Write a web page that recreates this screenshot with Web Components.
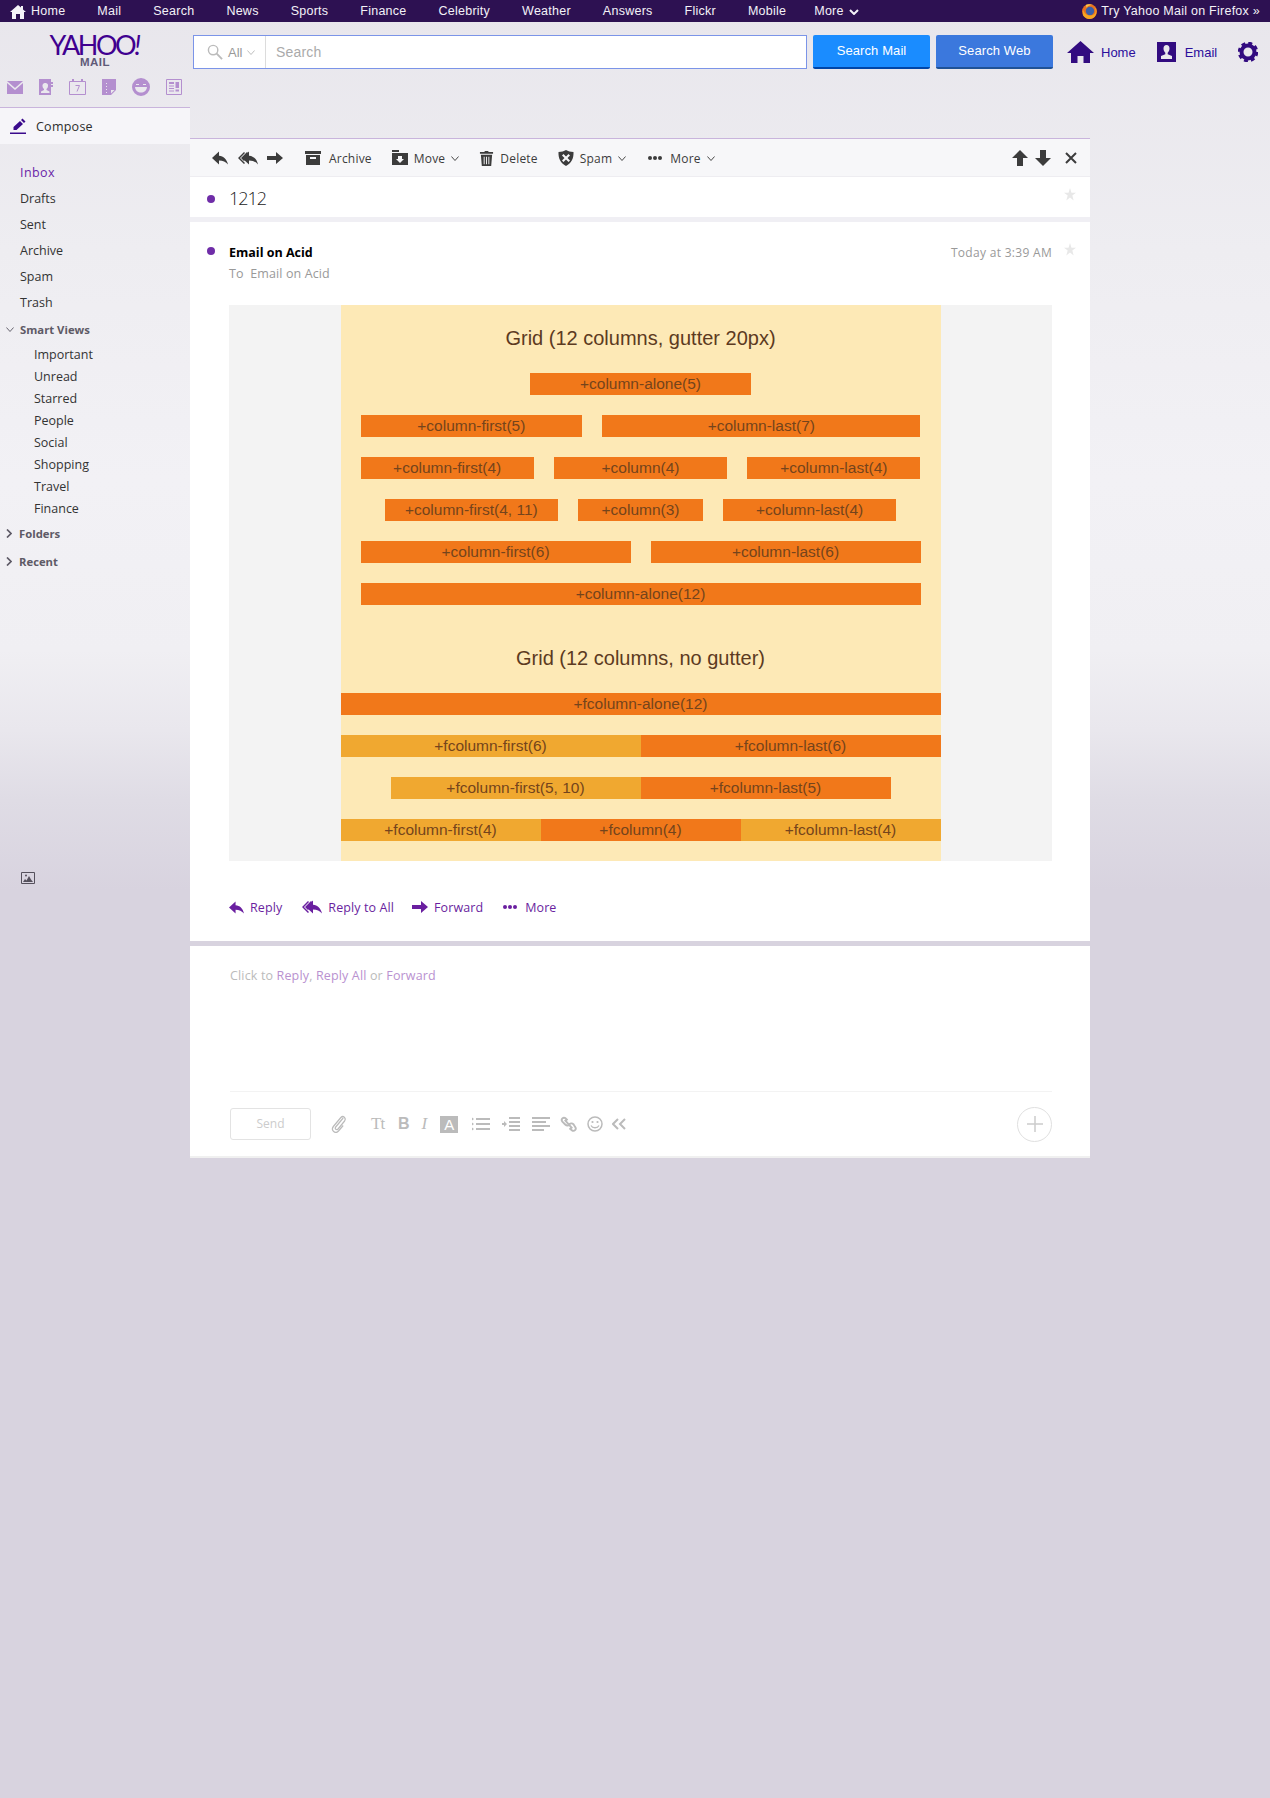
<!DOCTYPE html>
<html lang="en">
<head>
<meta charset="utf-8">
<title>Yahoo Mail</title>
<style>
  html { background: #d8d3df; height: 1798px; overflow: hidden; }
  body {
    margin: 0;
    height: 1798px;
    overflow: hidden;
    font-family: "Open Sans", "Liberation Sans", sans-serif;
    background: linear-gradient(180deg, #e8e6ec 0, #eeedf1 250px, #f2f1f5 480px, #f0eff3 650px, #e9e7ed 730px, #dfdce5 800px, #d8d3df 890px) no-repeat;
  }
  .shell { display: flex; align-items: flex-start; }
</style>
</head>
<body>
<ym-topnav></ym-topnav>
<div class="shell">
  <ym-sidebar></ym-sidebar>
  <ym-main>
    <ym-searchbar></ym-searchbar>
    <ym-toolbar></ym-toolbar>
    <ym-subject title-text="1212"></ym-subject>
    <ym-message>
      <ym-grid-demo></ym-grid-demo>
    </ym-message>
    <ym-composer></ym-composer>
  </ym-main>
</div>

<script>
(function () {
  "use strict";

  // Icon set, each entry is [viewBox, inner markup]
  const ICONS = {
    reply: ['0 0 16 16', '<path d="M0 8 7 1.500v4.200c4.500.3 7.800 3.300 9 8.800-2.300-2.800-5-4.100-9-4.100v4.100z"/>'],
    replyall: ['0 0 21 16', '<path d="M5 8 12 1.500v4.200c4.500.3 7.800 3.300 9 8.800-2.300-2.800-5-4.100-9-4.100v4.100z"/><path d="M7 2 1 8l6 6 1-1-5-5 5-5zM10 2 4 8l3 3 1-1-2-2 5-5z"/>'],
    forward: ['0 0 16 16', '<path d="M0 6h9V2l7 6-7 6v-4H0z"/>'],
    archive: ['0 0 16 16', '<path d="M0 1h16v3H0z"/><path fill-rule="evenodd" d="M1 5h14v10H1zM5 7v2h6V7z"/>'],
    move: ['0 0 16 16', '<path d="M0 0h7v2H0z"/><path fill-rule="evenodd" d="M0 3h16v12H0zM6 6v3H4l4 4 4-4h-2V6z"/>'],
    trash: ['0 0 16 16', '<path d="M6 0h4v1h5v2H1V1h5z"/><path fill-rule="evenodd" d="M2 4h12l-1 12H3zM5 6v8h1V6zM7.500 6v8h1V6zM10 6v8h1V6z"/>'],
    shield: ['0 0 16 16', '<path fill-rule="evenodd" d="M8 0c2 1.300 4.500 2 7.500 2 .3 6.500-2 11-7.500 14C2.500 13 .2 8.500.5 2 3.500 2 6 1.300 8 0zM5.500 4 4 5.500 6.500 8 4 10.500 5.500 12 8 9.500l2.500 2.500 1.500-1.500L9.500 8 12 5.500 10.500 4 8 6.500z"/>'],
    dots: ['0 0 14 4', '<circle cx="2" cy="2" r="2"/><circle cx="7" cy="2" r="2"/><circle cx="12" cy="2" r="2"/>'],
    up: ['0 0 16 16', '<path d="M8 0l8 8h-5v8H5V8H0z"/>'],
    down: ['0 0 16 16', '<path d="M8 16 0 8h5V0h6v8h5z"/>'],
    close: ['0 0 12 12', '<path d="M1 1l10 10M11 1 1 11" fill="none" stroke="currentColor" stroke-width="2"/>'],
    star: ['0 0 14 14', '<path d="M7 0l1.700 5H14l-4.300 3.100L11.300 13.500 7 10.300 2.700 13.500l1.600-5.400L0 5h5.300z"/>'],
    caret: ['0 0 9 5', '<path d="M.5.500l4 4 4-4" fill="none" stroke="currentColor"/>'],
    chevron: ['0 0 6 9', '<path d="M1 .5 5 4.500 1 8.500" fill="none" stroke="currentColor" stroke-width="1.700"/>'],
    morecaret: ['0 0 10 6', '<path d="M1 1l4 4 4-4" fill="none" stroke="currentColor" stroke-width="2"/>'],
    compose: ['0 0 16 16', '<path d="M10 3l3 3-6.500 6H3.500v-3zM11 2l1.500-1.500 3 3L14 5z"/><path d="M0 14.500h16V16H0z"/>'],
    envelope: ['0 0 16 13', '<path d="M0 0h16L8 7z"/><path d="M0 2l8 7 8-7v11H0z"/>'],
    contact: ['0 0 14 16', '<path fill-rule="evenodd" d="M0 0h12v3h2v2h-2v1h2v2h-2v8H0zM6 4a2.500 2.500 0 0 0-2.500 3c0 1.500 1 2.500 1.500 3v1l-3 1.500V14h8.500v-1.500L7.500 11v-1c.5-.5 1.500-1.500 1.500-3A2.500 2.500 0 0 0 6 4z"/>'],
    calendar: ['0 0 17 16', '<path fill="none" stroke="currentColor" d="M.5 2.500h16v13H.5z"/><path d="M3 0h2v3H3zM12 0h2v3h-2z"/><path fill="none" stroke="currentColor" d="M6.500 6.500h4l-2.500 6"/>'],
    notepad: ['0 0 14 16', '<path fill-rule="evenodd" d="M0 0h14v11l-5 5H0zM4 4v1h1V4zM4 7v1h1V7zM4 10v1h1v-1zM4 13v1h1v-1zM9 14.500l3.500-3.500H9z"/>'],
    face: ['0 0 18 18', '<path fill-rule="evenodd" d="M9 0a9 9 0 1 1 0 18A9 9 0 0 1 9 0zM3 9c.5 4 3 5.500 6 5.500S14.500 13 15 9zM4 6v1h3V6zM11 6v1h3V6z"/>'],
    news: ['0 0 16 16', '<path fill="none" stroke="currentColor" d="M.5.500h15v15H.5z"/><path d="M3 3h5v2H3zM3 6.500h5v1H3zM3 9h5v1H3zM3 11.500h5v1H3zM9.500 3H13v6H9.500zM9.500 10.500H13v2H9.500z"/>'],
    picture: ['0 0 14 12', '<path fill="none" stroke="currentColor" d="M.5.500h13v11H.5z"/><circle cx="5" cy="3.500" r="1"/><path d="M2 10l2-3 1.500 1.500L8 4l2 3.500 2 2.500z"/>'],
    search: ['0 0 17 17', '<circle cx="6.500" cy="6.500" r="5" fill="none" stroke="currentColor" stroke-width="1.500"/><path d="M10 10l6 6" fill="none" stroke="currentColor" stroke-width="2"/>'],
    home: ['0 0 27 22', '<path d="M13.500 0 27 12h-4v10h-6.500v-7h-6v7H4V12H0z"/>'],
    homesmall: ['0 0 16 14', '<path d="M8 0l3 2.600V1h2v3.400L16 7h-2v7h-4V9H6v5H2V7H0z"/>'],
    user: ['0 0 19 20', '<path fill-rule="evenodd" d="M0 0h19v20H0zM9.500 3C7.500 3 6.500 4.500 6.500 6.500c0 2 1 3.500 1.800 4.300v1.500L4 14v3h11v-3l-4.300-1.700v-1.500c.8-.8 1.800-2.300 1.800-4.300C12.500 4.500 11.500 3 9.500 3z"/>'],
    gear: ['0 0 20 20', '<circle cx="10" cy="10" r="6.500" fill="none" stroke="currentColor" stroke-width="4"/><circle cx="10" cy="10" r="9" fill="none" stroke="currentColor" stroke-width="2.500" stroke-dasharray="4 3.070"/>'],
    clip: ['0 0 16 18', '<path fill="none" stroke="currentColor" stroke-width="1.300" d="M13 3 5 12c-1.500 2 1 3.500 2.500 2L14.500 6c2-3-1.500-6-4-3.500L2.500 11.500c-3 4 2 8 5.500 4.500L13 10.500"/>'],
    list: ['0 0 18 14', '<path d="M4 1h14v2H4zM4 6h14v2H4zM4 11h14v2H4zM0 .500l2 1.500-2 1.500zM0 5.500l2 1.500-2 1.500zM0 10.500l2 1.500-2 1.500z"/>'],
    indent: ['0 0 18 14', '<path d="M7 0h11v2H7zM7 4h11v2H7zM7 8h11v2H7zM7 12h11v2H7zM0 6h2V4l3 3-3 3V8H0z"/>'],
    align: ['0 0 18 14', '<path d="M0 0h18v2H0zM0 4h14v2H0zM0 8h18v2H0zM0 12h12v2H0z"/>'],
    link: ['0 0 18 18', '<path fill="none" stroke="currentColor" stroke-width="2" d="M8 4.500 6 2.500C3.500.5.500 3.500 2.500 6l3 3c2 2 4 1 4.500 0M10 9c.5-1 2.500-2 4.500 0l1.500 2.500c2 2.500-1 5.500-3.500 3.500L10 13M5 4l8 9"/>'],
    smile: ['0 0 16 16', '<circle cx="8" cy="8" r="7" fill="none" stroke="currentColor" stroke-width="1.500"/><circle cx="5.500" cy="6" r="1.100"/><circle cx="10.500" cy="6" r="1.100"/><path d="M4 9.500c1.500 3 6.500 3 8 0" fill="none" stroke="currentColor" stroke-width="1.300"/>'],
    collapse: ['0 0 14 12', '<path d="M6 1 1 6l5 5M13 1 8 6l5 5" fill="none" stroke="currentColor" stroke-width="2"/>'],
    plus: ['0 0 16 16', '<path d="M8 0v16M0 8h16" fill="none" stroke="currentColor" stroke-width="1.500"/>'],
    firefox: ['0 0 16 16', '<circle cx="8" cy="8" r="8" fill="#e8701f"/><circle cx="8.500" cy="7.500" r="4.500" fill="#3a5fa8"/><path d="M1 6c2 6 8 8 12 5 2-2 2-5 0-8 3 2 3 7 1 10-3 4-10 4-13-1z" fill="#f5a623"/><path d="M4 1c2-1 5-1 7 0-3 0-5 1-6 3z" fill="#f7c64a"/>']
  };

  // small helper, shadow root from a string
  const shadow = (el, html) => {
    el.attachShadow({ mode: 'open' }).innerHTML = html;
  };

  class YmIcon extends HTMLElement {
    connectedCallback() {
      const [box, inner] = ICONS[this.getAttribute('name')];
      const w = this.getAttribute('w') || 16;
      const h = this.getAttribute('h') || w;
      shadow(this, `
        <style>
          :host { display: inline-flex; flex: none; width: ${w}px; height: ${h}px; }
          svg { display: block; width: 100%; height: 100%; fill: currentColor; }
        </style>
        <svg viewBox="${box}" preserveAspectRatio="none">${inner}</svg>`);
    }
  }

  class YmTopnav extends HTMLElement {
    connectedCallback() {
      const links = ['Mail', 'Search', 'News', 'Sports', 'Finance', 'Celebrity', 'Weather', 'Answers', 'Flickr', 'Mobile'];
      shadow(this, `
        <style>
          :host {
            display: flex; align-items: center; height: 22px; box-sizing: border-box; padding: 1px 10px 0;
            background: #2d1152; color: #f4f2f8;
            font: 12.5px/21px "Liberation Sans", Arial, sans-serif;
          }
          nav { display: flex; align-items: center; gap: 32px; flex: 1; letter-spacing: .25px; }
          a { display: inline-flex; align-items: center; gap: 5px; }
          .try { display: inline-flex; align-items: center; gap: 4px; letter-spacing: .25px; }
        </style>
        <nav>
          <a><ym-icon name="homesmall" w="16" h="14"></ym-icon>Home</a>
          ${links.map(l => `<a>${l}</a>`).join('')}
          <a style="margin-left:-4px">More <ym-icon name="morecaret" w="10" h="6"></ym-icon></a>
        </nav>
        <span class="try"><ym-icon name="firefox" w="15"></ym-icon>Try Yahoo Mail on Firefox »</span>`);
    }
  }

  class YmSidebar extends HTMLElement {
    connectedCallback() {
      const main = ['Drafts', 'Sent', 'Archive', 'Spam', 'Trash'];
      const smart = ['Important', 'Unread', 'Starred', 'People', 'Social', 'Shopping', 'Travel', 'Finance'];
      shadow(this, `
        <style>
          :host { display: block; flex: none; width: 190px; height: 880px; color: #333; font-size: 12.500px; }
          .logo { height: 57px; display: flex; flex-direction: column; align-items: center; }
          .yahoo {
            margin: 10px 2px 0 0; font: 27px/26px Lato, "Liberation Sans", sans-serif;
            letter-spacing: -2.500px; color: #400090;
          }
          .yahoo i { font-style: italic; }
          .sub { margin-top: -1px; font: bold 11.500px/11px "Liberation Sans", Arial, sans-serif; color: #5f5a78; letter-spacing: .5px; }
          .apps { display: flex; align-items: center; justify-content: space-between; height: 16px; padding: 0 8px 0 7px; color: #b48fcf; }
          .compose {
            display: flex; align-items: center; gap: 10px; height: 36px; margin-top: 12px; padding-left: 10px;
            background: #f6f5f9; border-top: 1px solid #c9b4dc; color: #2d2d2d; letter-spacing: .25px;
          }
          .compose ym-icon { color: #3a0a8c; }
          ul { list-style: none; margin: 0; padding: 0; }
          .folders { padding: 16px 0 0 20px; }
          .folders li { height: 26px; line-height: 26px; }
          .folders li.on { color: #6a1fa8; letter-spacing: .4px; }
          .head {
            display: flex; align-items: center; gap: 6px; height: 24px; padding-left: 6px;
            font-weight: 700; font-size: 11.300px; color: #5e5a66;
          }
          .head ym-icon { color: #5e5a66; }
          .smart { padding: 3px 0 0 34px; }
          .smart li { height: 22px; line-height: 22px; }
        </style>
        <div class="logo">
          <span class="yahoo">YAHOO<i>!</i></span>
          <span class="sub">MAIL</span>
        </div>
        <div class="apps">
          <ym-icon name="envelope" w="16" h="13"></ym-icon>
          <ym-icon name="contact" w="14" h="16"></ym-icon>
          <ym-icon name="calendar" w="17" h="16"></ym-icon>
          <ym-icon name="notepad" w="14" h="16"></ym-icon>
          <ym-icon name="face" w="18" h="18"></ym-icon>
          <ym-icon name="news" w="16" h="16"></ym-icon>
        </div>
        <div class="compose"><ym-icon name="compose" w="16"></ym-icon>Compose</div>
        <ul class="folders">
          <li class="on">Inbox</li>
          ${main.map(m => `<li>${m}</li>`).join('')}
        </ul>
        <div class="head" style="margin-top:1px"><ym-icon name="caret" w="8" h="5"></ym-icon>Smart Views</div>
        <ul class="smart">${smart.map(s => `<li>${s}</li>`).join('')}</ul>
        <div class="head" style="margin-top:1px"><ym-icon name="chevron" w="6" h="9" style="margin-right:1px"></ym-icon>Folders</div>
        <div class="head" style="margin-top:4px"><ym-icon name="chevron" w="6" h="9" style="margin-right:1px"></ym-icon>Recent</div>
        <ym-icon name="picture" w="14" h="12" style="display:block;margin:299px 0 0 21px;color:#55505c"></ym-icon>`);
    }
  }

  class YmMain extends HTMLElement {
    connectedCallback() {
      shadow(this, `
        <style>:host { display: block; flex: none; width: 900px; }</style>
        <slot></slot>`);
    }
  }

  class YmSearchbar extends HTMLElement {
    connectedCallback() {
      shadow(this, `
        <style>
          :host {
            display: flex; align-items: flex-start; width: 1080px; height: 116px; box-sizing: border-box; padding: 13px 0 0 3px;
            font: 13px "Liberation Sans", Arial, sans-serif;
          }
          .box {
            display: flex; align-items: center; flex: none; width: 612px; height: 32px;
            background: #fff; border: 1px solid #7b94e8;
          }
          .scope {
            display: flex; align-items: center; gap: 5px; width: 72px; height: 100%; box-sizing: border-box; padding-left: 13px;
            border-right: 1px solid #dcdcdc; color: #999;
          }
          .scope ym-icon { color: #bbb; }
          .input { padding-left: 10px; color: #aaa; font-size: 14px; letter-spacing: .2px; }
          .btn {
            flex: none; width: 117px; height: 32px; margin-left: 6px; box-sizing: content-box;
            border-radius: 2px; color: #fff; text-align: center; line-height: 32px; letter-spacing: .1px;
          }
          .mail { background: #1a8cff; border-bottom: 2px solid #0046a8; }
          .web { background: #3b78dd; border-bottom: 2px solid #1f5296; }
          .link { display: flex; align-items: center; height: 34px; gap: 7px; color: #2b0e9c; }
          .link ym-icon { color: #320b80; }
        </style>
        <div class="box">
          <div class="scope"><ym-icon name="search" w="16"></ym-icon>All <ym-icon name="caret" w="8" h="5"></ym-icon></div>
          <div class="input">Search</div>
        </div>
        <div class="btn mail">Search Mail</div>
        <div class="btn web">Search Web</div>
        <div class="link" style="margin-left:14px"><ym-icon name="home" w="27" h="22"></ym-icon>Home</div>
        <div class="link" style="margin-left:21px;gap:9px"><ym-icon name="user" w="19" h="20"></ym-icon>Email</div>
        <div class="link" style="margin-left:21px"><ym-icon name="gear" w="20"></ym-icon></div>`);
    }
  }

  class YmToolbar extends HTMLElement {
    connectedCallback() {
      shadow(this, `
        <style>
          :host {
            display: flex; align-items: center; height: 37px; padding-left: 22px; padding-right: 13px;
            background: #f7f7f9; border-top: 1px solid #c9b4dc; border-bottom: 1px solid #eeedf1;
            color: #3c3c3c; font-size: 12px; letter-spacing: .2px;
          }
          .item { display: inline-flex; align-items: center; gap: 6px; margin-right: 20px; padding-top: 1px; }
          ym-icon { color: #3c3c3c; }
          .grow { flex: 1; }
        </style>
        <ym-icon name="reply" w="16" style="margin-right:9px"></ym-icon>
        <ym-icon name="replyall" w="21" h="16" style="margin-right:9px"></ym-icon>
        <ym-icon name="forward" w="16" style="margin-right:22px"></ym-icon>
        <span class="item" style="gap:8px">
          <ym-icon name="archive" w="16"></ym-icon>Archive</span>
        <span class="item"><ym-icon name="move" w="16"></ym-icon>Move<ym-icon name="caret" w="8" h="5"></ym-icon></span>
        <span class="item"><ym-icon name="trash" w="15"></ym-icon>Delete</span>
        <span class="item" style="margin-right:22px"><ym-icon name="shield" w="16"></ym-icon>Spam<ym-icon name="caret" w="8" h="5"></ym-icon></span>
        <span class="item" style="gap:8px"><ym-icon name="dots" w="14" h="4"></ym-icon>More<ym-icon name="caret" w="8" h="5" style="margin-left:-2px"></ym-icon></span>
        <span class="grow"></span>
        <ym-icon name="up" w="16" style="margin-right:7px"></ym-icon>
        <ym-icon name="down" w="16" style="margin-right:14px"></ym-icon>
        <ym-icon name="close" w="12"></ym-icon>`);
    }
  }

  class YmSubject extends HTMLElement {
    connectedCallback() {
      shadow(this, `
        <style>
          :host {
            display: flex; align-items: flex-start; height: 40px; padding-left: 17px; padding-right: 14px;
            background: #fff; border-bottom: 5px solid #f0eff4; color: #222;
          }
          .dot { width: 8px; height: 8px; margin: 18px 14px 0 0; border-radius: 50%; background: #6f2da8; }
          .text { flex: 1; padding-top: 10px; font: 300 18px/22px "Open Sans", sans-serif; letter-spacing: -1px; }
          ym-icon { margin-top: 11px; color: #e8e8e8; }
        </style>
        <span class="dot"></span>
        <span class="text">${this.getAttribute('title-text')}</span>
        <ym-icon name="star" w="12" h="13"></ym-icon>`);
    }
  }

  class YmMessage extends HTMLElement {
    connectedCallback() {
      shadow(this, `
        <style>
          :host { display: block; background: #fff; border-bottom: 5px solid #d8d3df; font-size: 12.500px; }
          .head { display: flex; align-items: flex-start; height: 83px; padding: 0 14px 0 17px; box-sizing: border-box; }
          .dot { flex: none; width: 8px; height: 8px; margin: 25px 14px 0 0; border-radius: 50%; background: #6f2da8; }
          .who { flex: 1; padding-top: 21px; line-height: 20px; }
          .who b { display: block; margin-bottom: 1px; color: #000; font-size: 12.500px; }
          .who span { color: #999; letter-spacing: .1px; }
          .date { padding-top: 21px; margin-right: 12px; line-height: 20px; color: #999; font-size: 12px; letter-spacing: .3px; }
          .star { margin-top: 21px; color: #e8e8e8; }
          .body { margin: 0 38px 0 39px; background: #f3f3f3; }
          .actions { display: flex; align-items: center; height: 80px; box-sizing: border-box; padding: 12px 0 0 39px; color: #6a1fa0; letter-spacing: .1px; }
          .actions span { display: inline-flex; align-items: center; gap: 6px; margin-right: 19px; }
        </style>
        <div class="head">
          <span class="dot"></span>
          <div class="who"><b>Email on Acid</b><span>To&nbsp; Email on Acid</span></div>
          <div class="date">Today at 3:39 AM</div>
          <ym-icon class="star" name="star" w="12" h="13"></ym-icon>
        </div>
        <div class="body"><slot></slot></div>
        <div class="actions">
          <span><ym-icon name="reply" w="15"></ym-icon>Reply</span>
          <span style="margin-right:18px"><ym-icon name="replyall" w="21" h="16"></ym-icon>Reply to All</span>
          <span style="margin-right:20px"><ym-icon name="forward" w="16"></ym-icon>Forward</span>
          <span style="gap:8px"><ym-icon name="dots" w="14" h="4"></ym-icon>More</span>
        </div>`);
    }
  }

  // one coloured block of the demo grid
  class YmCell extends HTMLElement {
    connectedCallback() {
      const w = this.getAttribute('w');
      const tone = this.getAttribute('tone') === 'light' ? '#f0a830' : '#f1781a';
      shadow(this, `
        <style>
          :host {
            display: block; flex: none; width: ${w}px; height: 22px; background: ${tone};
            color: #74441c; text-align: center; font: 15.500px/22px "Liberation Sans", Arial, sans-serif;
          }
        </style>
        <slot></slot>`);
    }
  }

  class YmRow extends HTMLElement {
    connectedCallback() {
      const gap = this.getAttribute('gap') || 0;
      shadow(this, `
        <style>
          :host { display: flex; justify-content: center; gap: ${gap}px; margin-bottom: 20px; }
        </style>
        <slot></slot>`);
    }
  }

  class YmGridDemo extends HTMLElement {
    connectedCallback() {
      const row = (gap, cells) => `<ym-row gap="${gap}">${cells.map(c =>
        `<ym-cell w="${c[0]}" tone="${c[2] || ''}">${c[1]}</ym-cell>`).join('')}</ym-row>`;
      shadow(this, `
        <style>
          :host {
            display: block; box-sizing: border-box; width: 600px; height: 556px; margin: 0 auto; padding-top: 22px;
            background: #fde9b6; color: #5c3a21; font-family: "Liberation Sans", Arial, sans-serif;
          }
          h2 { margin: 0 0 24px; font-weight: 400; font-size: 20px; line-height: 22px; text-align: center; }
          h2.second { margin: 42px 0 24px; }
        </style>
        <h2>Grid (12 columns, gutter 20px)</h2>
        ${row(20, [[221.67, '+column-alone(5)']])}
        ${row(20, [[221.67, '+column-first(5)'], [318.33, '+column-last(7)']])}
        ${row(20, [[173.33, '+column-first(4)'], [173.33, '+column(4)'], [173.33, '+column-last(4)']])}
        ${row(20, [[173.33, '+column-first(4, 11)'], [125, '+column(3)'], [173.33, '+column-last(4)']])}
        ${row(20, [[270, '+column-first(6)'], [270, '+column-last(6)']])}
        ${row(20, [[560, '+column-alone(12)']])}
        <h2 class="second">Grid (12 columns, no gutter)</h2>
        ${row(0, [[600, '+fcolumn-alone(12)']])}
        ${row(0, [[300, '+fcolumn-first(6)', 'light'], [300, '+fcolumn-last(6)']])}
        ${row(0, [[250, '+fcolumn-first(5, 10)', 'light'], [250, '+fcolumn-last(5)']])}
        ${row(0, [[200, '+fcolumn-first(4)', 'light'], [200, '+fcolumn(4)'], [200, '+fcolumn-last(4)', 'light']])}`);
    }
  }

  class YmComposer extends HTMLElement {
    connectedCallback() {
      shadow(this, `
        <style>
          :host { display: block; height: 210px; background: #fff; border-bottom: 2px solid #f0f0f0; font-size: 12.500px; }
          .hint { height: 146px; margin: 0 38px 0 40px; padding-top: 20px; box-sizing: border-box; line-height: 20px; color: #bbb; letter-spacing: .15px; border-bottom: 1px solid #f3f3f3; }
          .hint a { color: #b991d0; }
          .bar { display: flex; align-items: center; height: 34px; margin-top: 15px; padding: 0 38px 0 40px; color: #bbb; }
          .send {
            flex: none; width: 79px; height: 30px; margin-right: 20px; border: 1px solid #e3e3e3; border-radius: 3px;
            text-align: center; line-height: 30px; color: #ccc; font-size: 12px;
          }
          .tt { width: 16px; margin-left: 13px; margin-right: 11px; font: 17px/18px "Liberation Serif", serif; letter-spacing: -1px; }
          .b { margin-right: 12px; font: bold 16px/18px "Liberation Sans", sans-serif; }
          .i { margin-right: 13px; font: italic 17px/18px "Liberation Serif", serif; }
          .a {
            width: 18px; height: 17px; margin-right: 14px; background: #bbb; color: #fff; text-align: center;
            font: 15px/17px "Liberation Sans", sans-serif;
          }
          ym-icon { margin-right: 12px; }
          .grow { flex: 1; }
          .plus {
            display: flex; align-items: center; justify-content: center; width: 33px; height: 33px;
            border: 1px solid #e0e0e0; border-radius: 50%; color: #ccc;
          }
          .plus ym-icon { margin: 0; }
        </style>
        <div class="hint">Click to <a>Reply</a>, <a>Reply All</a> or <a>Forward</a></div>
        <div class="bar">
          <div class="send">Send</div>
          <ym-icon name="clip" w="15" h="18"></ym-icon>
          <span class="tt">Tt</span>
          <span class="b">B</span>
          <span class="i">I</span>
          <span class="a">A</span>
          <ym-icon name="list" w="18" h="14"></ym-icon>
          <ym-icon name="indent" w="18" h="14"></ym-icon>
          <ym-icon name="align" w="18" h="14" style="margin-right:10px"></ym-icon>
          <ym-icon name="link" w="17" style="margin-right:10px"></ym-icon>
          <ym-icon name="smile" w="16" style="margin-right:9px"></ym-icon>
          <ym-icon name="collapse" w="14" h="12"></ym-icon>
          <span class="grow"></span>
          <div class="plus"><ym-icon name="plus" w="16"></ym-icon></div>
        </div>`);
    }
  }

  customElements.define('ym-icon', YmIcon);
  customElements.define('ym-topnav', YmTopnav);
  customElements.define('ym-sidebar', YmSidebar);
  customElements.define('ym-main', YmMain);
  customElements.define('ym-searchbar', YmSearchbar);
  customElements.define('ym-toolbar', YmToolbar);
  customElements.define('ym-subject', YmSubject);
  customElements.define('ym-message', YmMessage);
  customElements.define('ym-cell', YmCell);
  customElements.define('ym-row', YmRow);
  customElements.define('ym-grid-demo', YmGridDemo);
  customElements.define('ym-composer', YmComposer);
})();
</script>
</body>
</html>
